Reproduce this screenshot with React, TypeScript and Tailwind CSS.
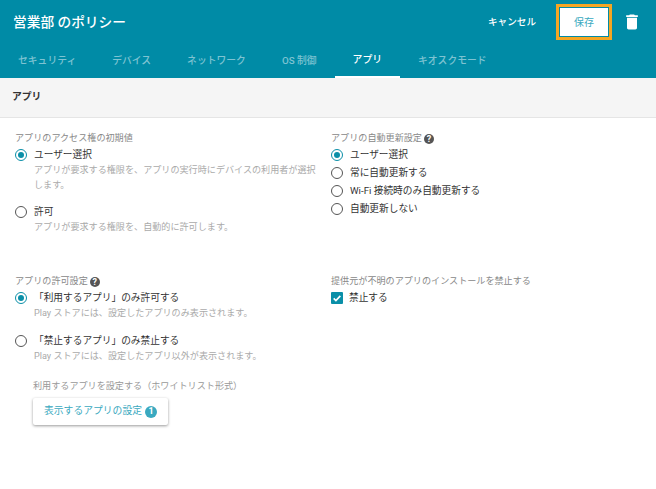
import React from 'react';

const tabs = ['セキュリティ', 'デバイス', 'ネットワーク', 'OS 制御', 'アプリ', 'キオスクモード'];

function Radio({ checked }: { checked?: boolean }) {
  return (
    <span className={`flex h-[12px] w-[12px] shrink-0 items-center justify-center rounded-full border-[1.5px] ${checked ? 'border-[#0a8fa8]' : 'border-[#555]'}`}>
      {checked && <span className="h-[6px] w-[6px] rounded-full bg-[#0a8fa8]" />}
    </span>
  );
}

function Help() {
  return (
    <span className="ml-[2px] flex h-[10px] w-[10px] items-center justify-center rounded-full bg-[#555] text-[9px] font-bold leading-none text-white">?</span>
  );
}

function Option({ label, desc, checked }: { label: string; desc?: React.ReactNode; checked?: boolean }) {
  return (
    <div>
      <div className="flex h-[18px] items-center gap-[7px]">
        <Radio checked={checked} />
        <span className="text-[9.7px] text-[#333]">{label}</span>
      </div>
      {desc && <div className="-mt-[1px] pl-[19px] text-[9.1px] leading-[15px] text-[#aaa]">{desc}</div>}
    </div>
  );
}

function Heading({ children, help }: { children: React.ReactNode; help?: boolean }) {
  return (
    <div className="flex h-[14px] items-center text-[9.1px] text-[#888]">
      {children}
      {help && <Help />}
    </div>
  );
}

export default function App() {
  return (
    <div className="h-[489px] w-[656px] overflow-hidden bg-white" style={{ fontFamily: 'Roboto, "Noto Sans CJK JP", sans-serif' }}>
      <div className="h-[78px] bg-[#008ba6]">
        <div className="flex h-[44px] items-center pl-[13px] pr-[14px]">
          <h1 className="flex-1 text-[13.7px] font-medium text-white">営業部 のポリシー</h1>
          <span className="mr-[20px] text-[9.6px] font-medium text-white">キャンセル</span>
          <div className="border-[3px] border-[#f5a623] p-px">
            <button className="h-[28px] w-[48px] bg-white text-[10px] text-[#3aa9c0]">保存</button>
          </div>
          <svg viewBox="0 0 24 24" className="-mt-[1px] ml-[10px] h-[20px] w-[20px] fill-white">
            <path d="M6 19c0 1.1.9 2 2 2h8c1.1 0 2-.9 2-2V7H6v12zM19 4h-3.5l-1-1h-5l-1 1H5v2h14V4z" />
          </svg>
        </div>
        <div className="flex h-[34px]">
          {tabs.map((t) => (
            <div key={t} className={`flex items-center px-[18px] text-[9.8px] font-medium ${t === 'アプリ' ? 'border-b-2 border-white text-white' : 'text-[#7ec3d2]'}`}>
              {t}
            </div>
          ))}
        </div>
      </div>
      <div className="flex h-[40px] items-center border-b border-[#e5e5e5] bg-[#f5f5f5] pl-[12px] text-[9.8px] font-bold text-[#333]">アプリ</div>
      <div className="grid grid-cols-[316px_1fr] pl-[15px] pt-[14px]">
        <div className="h-[143px]">
          <Heading>アプリのアクセス権の初期値</Heading>
          <Option checked label="ユーザー選択" desc={<>アプリが要求する権限を、アプリの実行時にデバイスの利用者が選択<br />します。</>} />
          <div className="mt-[10px]"><Option label="許可" desc="アプリが要求する権限を、自動的に許可します。" /></div>
        </div>
        <div>
          <Heading help>アプリの自動更新設定</Heading>
          <Option checked label="ユーザー選択" />
          <Option label="常に自動更新する" />
          <Option label="Wi-Fi 接続時のみ自動更新する" />
          <Option label="自動更新しない" />
        </div>
        <div>
          <Heading help>アプリの許可設定</Heading>
          <Option checked label="「利用するアプリ」のみ許可する" desc="Play ストアには、設定したアプリのみ表示されます。" />
          <div className="mt-[11px]"><Option label="「禁止するアプリ」のみ禁止する" desc="Play ストアには、設定したアプリ以外が表示されます。" /></div>
          <div className="mt-[15px] pl-[18px]">
            <div className="text-[9.1px] leading-[14px] text-[#999]">利用するアプリを設定する（ホワイトリスト形式）</div>
            <button className="mt-[5px] flex h-[27px] w-[135px] items-center justify-center gap-[3px] rounded-[2px] bg-white text-[9.8px] text-[#3aa9c0] shadow-[0_1px_3px_rgba(0,0,0,0.4)]">
              表示するアプリの設定
              <span className="flex h-[12px] w-[12px] items-center justify-center rounded-full bg-[#3aa9c0] text-[9px] font-bold text-white">1</span>
            </button>
          </div>
        </div>
        <div>
          <Heading>提供元が不明のアプリのインストールを禁止する</Heading>
          <div className="flex h-[18px] items-center gap-[6px]">
            <span className="flex h-[12px] w-[12px] items-center justify-center rounded-[1px] bg-[#0a8fa8]">
              <svg viewBox="0 0 12 12" className="h-[10px] w-[10px]"><path d="M2 6.5l2.7 2.7L10 3.5" fill="none" stroke="#fff" strokeWidth="2" /></svg>
            </span>
            <span className="text-[9.7px] text-[#333]">禁止する</span>
          </div>
        </div>
      </div>
    </div>
  );
}
